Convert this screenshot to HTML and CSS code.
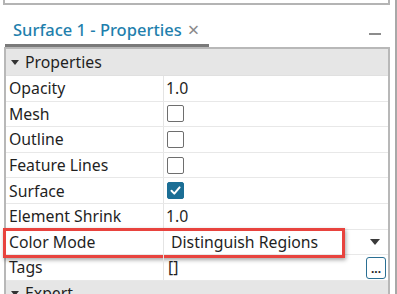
FILE: index.html
```html
<!DOCTYPE html>
<html lang="en">
<head>
  <meta charset="UTF-8" />
  <title>Surface 1 - Properties</title>
  <link rel="stylesheet" href="styles.css">
</head>
<body>
  <div class="window">
    <div class="top-frame"></div>

    <div class="tabbar">
      <div class="tab">
        <span class="tab-title">Surface 1 - Properties</span>
        <span class="tab-close">×</span>
      </div>
      <span class="minimize"></span>
    </div>

    <div class="panel">
      <div class="group"><span class="caret"></span>Properties</div>

      <div class="row"><div class="name">Opacity</div><div class="value">1.0</div></div>
      <div class="row"><div class="name">Mesh</div><div class="value"><span class="check"></span></div></div>
      <div class="row"><div class="name">Outline</div><div class="value"><span class="check"></span></div></div>
      <div class="row"><div class="name">Feature Lines</div><div class="value"><span class="check"></span></div></div>
      <div class="row">
        <div class="name">Surface</div>
        <div class="value">
          <span class="check checked">
            <svg width="13" height="13" viewBox="0 0 13 13"><path d="M2.5 6.8 L5.3 9.6 L10.6 3.4" fill="none" stroke="#fff" stroke-width="2" stroke-linecap="round" stroke-linejoin="round"/></svg>
          </span>
        </div>
      </div>
      <div class="row"><div class="name">Element Shrink</div><div class="value">1.0</div></div>
      <div class="row highlight">
        <div class="name">Color Mode</div>
        <div class="value combo">Distinguish Regions<span class="drop"></span></div>
      </div>
      <div class="row">
        <div class="name">Tags</div>
        <div class="value tags">[]<span class="more">...</span></div>
      </div>

      <div class="group last"><span class="caret"></span>Expert</div>
    </div>
  </div>
</body>
</html>
```

FILE: styles.css
```css
body {
  margin: 0;
  background-color: #ffffff;
  font-family: 'Noto Sans', 'Open Sans', sans-serif;
  color: #1f1f1f;
  overflow: hidden;
}
.window {
  width: 395px;
  height: 294px;
  border-right: 2px solid #a8a8a8;
  overflow: hidden;
}
.top-frame {
  height: 3px;
  margin: 0 5px 0 3px;
  border: 2px solid #b4b4b4;
  border-top: none;
}
.tabbar {
  height: 42px;
  display: flex;
  align-items: flex-end;
  justify-content: space-between;
  padding: 0 14px 0 5px;
}
.tab {
  width: 204px;
  height: 28px;
  padding: 0 0 3px 8px;
  box-sizing: border-box;
  display: flex;
  align-items: center;
  gap: 6px;
  border-bottom: 3px solid #7a7a7a;
  line-height: 1;
}
.tab-title {
  color: #1f7fad;
  font-size: 16.5px;
  font-weight: 500;
  white-space: nowrap;
}
.tab-close {
  color: #8a8a8a;
  font-size: 20px;
}
.minimize {
  width: 12px;
  height: 2px;
  background-color: #8c8c8c;
  margin-bottom: 12px;
}
.panel {
  margin: 0 5px 0 4px;
  border: 2px solid #b8b8b8;
  border-bottom: none;
  font-size: 15.8px;
}
.group {
  height: 26px;
  background-color: #e6e6e6;
  display: flex;
  align-items: center;
  padding-left: 5px;
  gap: 6px;
  border-bottom: 1px solid #e0e0e0;
}
.group.last {
  align-items: flex-start;
  padding-top: 1px;
  height: 30px;
}
.caret {
  width: 0;
  height: 0;
  border-left: 4px solid transparent;
  border-right: 4px solid transparent;
  border-top: 5px solid #333333;
}
.group.last .caret {
  margin-top: 9px;
}
.row {
  height: 25.6px;
  display: flex;
  border-bottom: 1px solid #e8e8e8;
  box-sizing: border-box;
  position: relative;
}
.name {
  width: 154px;
  padding-left: 3px;
  display: flex;
  align-items: center;
  border-right: 1px solid #e4e4e4;
  white-space: nowrap;
}
.value {
  flex: 1;
  display: flex;
  align-items: center;
  padding-left: 2px;
}
.check {
  width: 15px;
  height: 15px;
  border: 1.5px solid #6e6e6e;
  border-radius: 2px;
  margin-left: 1px;
  display: flex;
  align-items: center;
  justify-content: center;
}
.check.checked {
  background-color: #1b6e95;
  border-color: #1b6e95;
}
.combo {
  padding-left: 7px;
  padding-right: 8px;
  justify-content: space-between;
}
.drop {
  width: 0;
  height: 0;
  border-left: 5px solid transparent;
  border-right: 5px solid transparent;
  border-top: 6px solid #3a3a3a;
}
.highlight::after {
  content: "";
  position: absolute;
  left: -3px;
  top: -2px;
  width: 336px;
  height: 24px;
  border: 3px solid #e8433e;
  box-shadow: 1px 2px 4px rgba(0, 0, 0, 0.35);
}
.tags {
  padding-left: 4px;
  justify-content: space-between;
  padding-right: 2px;
}
.more {
  width: 20px;
  height: 22px;
  box-sizing: border-box;
  border: 1.5px solid #2a6f93;
  border-radius: 3px;
  font-size: 12px;
  font-weight: bold;
  line-height: 1;
  display: flex;
  align-items: flex-end;
  justify-content: center;
  padding-bottom: 3px;
  margin-top: 2px;
}
```
